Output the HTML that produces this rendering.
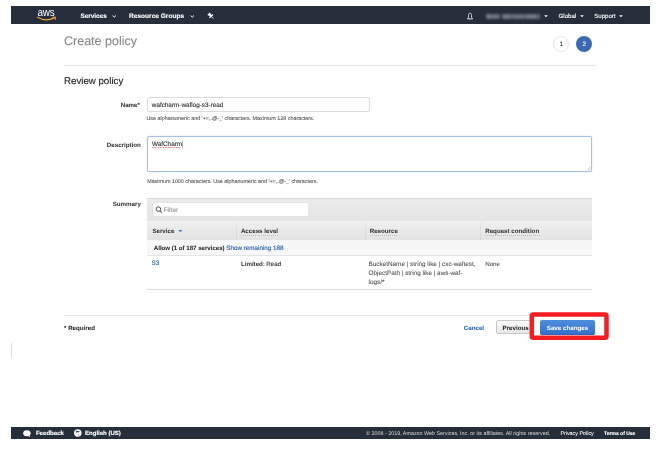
<!DOCTYPE html>
<html><head><meta charset="utf-8">
<style>
*{margin:0;padding:0;box-sizing:border-box}
html,body{width:663px;height:449px;overflow:hidden;background:#fff;}
body{will-change:transform;text-rendering:geometricPrecision;-webkit-text-stroke-width:0.12px;font-family:"Liberation Sans",sans-serif;color:#444}
.abs{position:absolute;white-space:nowrap}
#nav{position:absolute;left:11px;top:6px;width:639px;height:18px;background:#262d3b}
#nav .t{position:absolute;color:#fff;font-weight:bold;font-size:6.4px;line-height:8px;top:7px}
#nav .n{font-weight:normal;font-size:6.1px;-webkit-text-stroke-width:0.1px}
.chev{position:absolute;top:9px;width:5px;height:3px}
.title{left:64px;top:34px;font-size:12.5px;color:#888;line-height:14px;-webkit-text-stroke-width:0.1px}
.hr{position:absolute;height:1px;background:#e6e6e6}
.sub{left:64px;top:75.5px;font-size:9.7px;color:#222;line-height:11px}
.lbl{font-weight:bold;font-size:6.2px;color:#333;line-height:8px;-webkit-text-stroke-width:0.02px}
.help{font-size:5.37px;color:#5e5e5e;line-height:7px}
.inp{position:absolute;border:1px solid #dbdbdb;border-radius:2px;background:#fff}
.txt{font-size:6.35px;color:#333;line-height:8px}
.circle{position:absolute;width:16px;height:16px;border-radius:50%;text-align:center;line-height:16px;font-size:6.5px}
#foot{position:absolute;left:11px;top:426.6px;width:639px;height:12px;background:#262d3b}
#foot .t{position:absolute;color:#fff;font-size:5.3px;line-height:7px;top:4.4px}
</style></head><body>
<div id="nav">
  <!-- aws logo -->
  <svg style="position:absolute;left:26px;top:2px" width="22" height="14" viewBox="0 0 22 14">
    <text x="0.6" y="8.1" font-family="Liberation Sans" font-size="11.4" fill="#fff" transform="scale(0.87 1)" style="letter-spacing:-0.2px">aws</text>
    <path d="M0.6 9.3 Q9 14.2 17.2 9.9" stroke="#eea13a" stroke-width="1.3" fill="none" stroke-linecap="round"/>
    <path d="M15.6 9.2 L18.6 9.1 L18.1 11.6" stroke="#eea13a" stroke-width="1" fill="none" stroke-linecap="round" stroke-linejoin="round"/>
  </svg>
  <div class="t" style="left:69.4px">Services</div>
  <svg class="chev" style="left:101px" viewBox="0 0 5 3"><path d="M0.6 0.5 L2.3 2.1 L4 0.5" stroke="#fff" stroke-width="1" fill="none"/></svg>
  <div class="t" style="left:118.1px;font-size:6.55px">Resource Groups</div>
  <svg class="chev" style="left:179px" viewBox="0 0 5 3"><path d="M0.6 0.5 L2.3 2.1 L4 0.5" stroke="#fff" stroke-width="1" fill="none"/></svg>
  <svg style="position:absolute;left:196.2px;top:6px" width="8" height="8" viewBox="0 0 8 8"><g transform="rotate(-45 4 4)"><rect x="2.3" y="0.6" width="3.4" height="1.2" fill="#fff"/><rect x="2.9" y="1.6" width="2.2" height="2.2" fill="#fff"/><rect x="1.6" y="3.6" width="4.8" height="1.3" fill="#fff"/><rect x="3.6" y="4.8" width="0.8" height="2.8" fill="#ddd"/></g></svg>
  <!-- bell -->
  <svg style="position:absolute;left:454.9px;top:5.5px" width="8" height="9" viewBox="0 0 8 9"><path d="M4 1.1 C2.9 1.1 2.5 2.2 2.5 3.4 L2.4 5.6 L1.2 6.8 L6.8 6.8 L5.6 5.6 L5.5 3.4 C5.5 2.2 5.1 1.1 4 1.1 Z" stroke="#fff" stroke-width="0.75" fill="none" stroke-linejoin="round"/><path d="M3.1 7.3 Q4 8.3 4.9 7.3 Z" fill="#fff"/></svg>
  <div style="position:absolute;left:474.7px;top:7px;width:56px;height:7px;filter:blur(0.9px)">
    <div style="position:absolute;left:0.3px;top:0.8px;width:14px;height:5.6px;background:#606875"></div>
    <div style="position:absolute;left:1.5px;top:1.2px;width:4px;height:4.5px;background:#737b86"></div>
    <div style="position:absolute;left:7px;top:1.6px;width:6px;height:3.8px;background:#6d7580"></div>
    <div style="position:absolute;left:16.5px;top:0.8px;width:38px;height:5.6px;background:#5d6571"></div>
    <div style="position:absolute;left:17.5px;top:1.2px;width:7px;height:4.6px;background:#6e7681"></div>
    <div style="position:absolute;left:27px;top:2px;width:11px;height:3.6px;background:#68707b"></div>
    <div style="position:absolute;left:41px;top:1.2px;width:9px;height:4.6px;background:#6f7782"></div>
  </div>
  <svg style="position:absolute;left:533.3px;top:9px" width="4" height="2.5" viewBox="0 0 4 2.5"><path d="M0.2 0.2 L3.8 0.2 L2 2.3Z" fill="#fff"/></svg>
  <div class="t n" style="left:547.6px;top:6.80px">Global</div>
  <svg style="position:absolute;left:569px;top:9px" width="4" height="2.5" viewBox="0 0 4 2.5"><path d="M0.2 0.2 L3.8 0.2 L2 2.3Z" fill="#fff"/></svg>
  <div class="t n" style="left:583.2px;top:6.8px">Support</div>
  <svg style="position:absolute;left:608px;top:9px" width="4" height="2.5" viewBox="0 0 4 2.5"><path d="M0.2 0.2 L3.8 0.2 L2 2.3Z" fill="#fff"/></svg>
</div>

<div class="abs title">Create policy</div>
<div class="circle" style="left:553.3px;top:35.5px;border:0.6px solid #e5e5e5;color:#333">1</div>
<div class="circle" style="left:576.2px;top:35.5px;line-height:17px;background:#3b6ab3;color:#fff">2</div>
<div class="hr" style="left:64px;top:65px;width:532px"></div>

<div class="abs sub">Review policy</div>

<div class="abs lbl" style="left:120.7px;top:102.10px">Name*</div>
<div class="inp" style="left:147px;top:97px;width:223px;height:14.5px"></div>
<div class="abs txt" style="left:151.8px;top:101.6px">wafcharm-waflog-s3-read</div>
<div class="abs help" style="left:146.5px;top:115.60px">Use alphanumeric and '+=,.@-_' characters. Maximum 128 characters.</div>

<div class="abs lbl" style="left:106.8px;top:141.7px">Description</div>
<div class="inp" style="left:147px;top:136px;width:445px;height:35.5px;border:1px solid #a3bfec;box-shadow:0 0 1.5px #c4d6f3"></div>
<svg style="position:absolute;left:586px;top:166px" width="5" height="5" viewBox="0 0 5 5"><path d="M1 4.3 L4.3 1 M2.6 4.3 L4.3 2.6" stroke="#999" stroke-width="0.5"/></svg>
<div class="abs txt" style="left:152px;top:141.20px">WafCharm</div>
<svg style="position:absolute;left:150px;top:140px" width="36" height="10" viewBox="0 0 36 10"><path d="M2 7.6 L30.5 7.6" stroke="#dd3333" stroke-width="0.75" stroke-dasharray="0.9 0.7" fill="none"/><rect x="32" y="1" width="0.9" height="7.2" fill="#aaa"/></svg>
<div class="abs help" style="left:147.2px;top:179.10px">Maximum 1000 characters. Use alphanumeric and '+=,.@-_' characters.</div>

<div class="abs lbl" style="left:112.7px;top:200.6px">Summary</div>
<!-- table -->
<div style="position:absolute;left:147px;top:198px;width:444.6px;height:23.5px;background:linear-gradient(#ebebeb,#e4e4e4);border-top:1px solid #dcdcdc"></div>
<div style="position:absolute;left:152.8px;top:203.4px;width:154.8px;height:12.5px;background:#fff;border-radius:1.5px;box-shadow:-0.3px -0.3px 0.6px #cfcfcf"></div>
<svg style="position:absolute;left:154.5px;top:206.2px" width="8" height="8" viewBox="0 0 8 8"><circle cx="3.4" cy="3.1" r="2.3" stroke="#3a3a3a" stroke-width="0.9" fill="none"/><path d="M5 4.8 L7.2 6.8" stroke="#3a3a3a" stroke-width="1"/></svg>
<div class="abs txt" style="left:163.6px;top:206.70px;color:#999;font-size:6.6px">Filter</div>

<div style="position:absolute;left:147px;top:221px;width:444.6px;height:19px;background:linear-gradient(#eeeeee,#e3e3e3);border-top:1px solid #f2f2f2"></div>
<div style="position:absolute;left:236px;top:222px;width:1px;height:18px;background:linear-gradient(#e4e4e4,#d6d6d6)"></div>
<div style="position:absolute;left:364.8px;top:222px;width:1px;height:18px;background:linear-gradient(#e4e4e4,#d6d6d6)"></div>
<div style="position:absolute;left:480px;top:222px;width:1px;height:18px;background:linear-gradient(#e4e4e4,#d6d6d6)"></div>
<div class="abs lbl" style="left:152.4px;top:227.60px">Service</div>
<svg style="position:absolute;left:177.5px;top:229.6px" width="5" height="3" viewBox="0 0 5 3"><path d="M0.2 0.3 L4.6 0.3 L2.4 2.1Z" fill="#2d62b8"/></svg>
<div class="abs lbl" style="left:240.9px;top:227.5px;line-height:7px">Access level</div>
<div style="position:absolute;left:241.1px;top:235px;width:37.3px;height:1px;background:repeating-linear-gradient(90deg,#c0c0c0 0 1px,transparent 1px 2px)"></div>
<div class="abs lbl" style="left:369.7px;top:227.5px;line-height:7px">Resource</div>
<div style="position:absolute;left:369.9px;top:235px;width:28.3px;height:1px;background:repeating-linear-gradient(90deg,#c0c0c0 0 1px,transparent 1px 2px)"></div>
<div class="abs lbl" style="left:485.2px;top:227.5px;line-height:7px">Request condition</div>
<div style="position:absolute;left:485.4px;top:235px;width:54.3px;height:1px;background:repeating-linear-gradient(90deg,#c0c0c0 0 1px,transparent 1px 2px)"></div>

<div style="position:absolute;left:147px;top:239.5px;width:444.6px;height:16px;background:#f7f7f7;border-bottom:0.6px solid #e4e4e4"></div>
<div class="abs lbl" style="left:153.8px;top:244.60px;color:#222;font-size:6.1px">Allow (1 of 187 services)</div>
<div class="abs txt" style="left:226.2px;top:245.30px;color:#2a61b6;font-size:6.3px">Show remaining 188</div>

<div class="abs txt" style="left:151.6px;top:260.40px;color:#2a61b6;font-size:6.3px">S3</div>
<div class="abs txt" style="left:240.9px;top:260.8px;font-size:6.2px"><b style="-webkit-text-stroke-width:0">Limited</b>: Read</div>
<div class="abs txt" style="left:368.6px;top:259.90px;font-size:6.35px;line-height:9.2px;color:#4a4a4a;-webkit-text-stroke-width:0.05px">BucketName | string like | cxc-waftest,<br>ObjectPath | string like | aws-waf-<br>logs/*</div>
<div class="abs txt" style="left:485.2px;top:260.8px;font-size:6.2px;color:#4a4a4a;-webkit-text-stroke-width:0.05px">None</div>
<div style="position:absolute;left:147px;top:289px;width:444.6px;height:0.6px;background:#e0e0e0"></div>

<div class="hr" style="left:64px;top:315px;width:532px"></div>
<div class="abs lbl" style="left:64px;top:324.7px;color:#222">* Required</div>
<div class="abs lbl" style="left:463.8px;top:324.8px;color:#2162b9">Cancel</div>
<div style="position:absolute;left:495.7px;top:320.4px;width:37px;height:13.3px;border:0.6px solid #c8c8c8;border-radius:2px;background:linear-gradient(#fafafa,#e8e8e8)"></div>
<div class="abs lbl" style="left:502.5px;top:324.70px;color:#222">Previous</div>
<div style="position:absolute;left:539.8px;top:320px;width:55.3px;height:14.8px;border-radius:2px;background:linear-gradient(#4d8ddd,#3270c8);box-shadow:inset 0 -0.6px 0 #2a60b0"></div>
<div class="abs lbl" style="left:546.8px;top:324.5px;color:#fff">Save changes</div>
<svg style="position:absolute;left:0;top:0" width="663" height="449"><rect x="531.8" y="314.45" width="74.7" height="23.3" rx="1.5" stroke="#f51c22" stroke-width="4.5" fill="none"/></svg>

<div style="position:absolute;left:11px;top:343px;width:1px;height:14px;background:#dcdcdc"></div>

<div id="foot">
  <svg style="position:absolute;left:11.9px;top:3px" width="8" height="8" viewBox="0 0 8 8"><ellipse cx="3.9" cy="3.2" rx="3.7" ry="3" fill="#fff"/><path d="M4.5 5.5 L7.3 7.2 L6.2 4.8Z" fill="#fff"/></svg>
  <div class="t" style="left:24.9px;font-weight:bold;font-size:6.1px;top:3.80px">Feedback</div>
  <svg style="position:absolute;left:62.6px;top:2.6px" width="8" height="8" viewBox="0 0 8 8"><circle cx="3.8" cy="3.9" r="3.75" fill="#fff"/><path d="M1.7 2.1 L3.0 1.5 L4.4 2.3 L5.9 1.7 L4.9 3.3 L3.4 3.1 L2.9 4.3 L2.2 3.1 Z" fill="#3a4352"/><circle cx="4.8" cy="6.0" r="0.55" fill="#3a4352"/></svg>
  <div class="t" style="left:74.1px;font-weight:bold;font-size:6.0px;top:4.70px">English (US)</div>
  <div class="t" style="left:355px;font-size:5.38px;color:#dcdcdc;-webkit-text-stroke-width:0">© 2008 - 2019, Amazon Web Services, Inc. or its affiliates. All rights reserved.</div>
  <div class="t" style="left:549.4px;font-size:5.37px;-webkit-text-stroke-width:0.05px">Privacy Policy</div>
  <div class="t" style="left:593px;font-weight:bold;font-size:5.03px">Terms of Use</div>
</div>
</body></html>
